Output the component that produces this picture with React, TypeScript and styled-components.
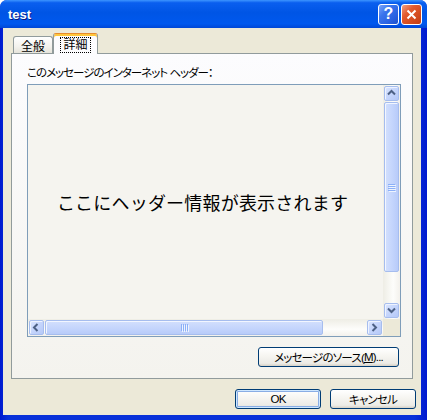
import React from "react";
import styled, { createGlobalStyle, css } from "styled-components";

const UI_FONT = `"Liberation Sans", "Noto Sans CJK JP", sans-serif`;

const GlobalStyle = createGlobalStyle`
  html, body {
    margin: 0;
    padding: 0;
    background: #ffffff;
  }
  body {
    font-family: ${UI_FONT};
    font-size: 12px;
  }
`;

const Window = styled.div`
  width: 427px;
  height: 420px;
  display: flex;
  flex-direction: column;
  background: #0831d9;
  border-radius: 7px 7px 0 0;
  overflow: hidden;
`;

const TitleBar = styled.div`
  flex: none;
  height: 28px;
  display: flex;
  align-items: center;
  justify-content: space-between;
  padding: 0 5px 0 8px;
  background: linear-gradient(
    to bottom,
    #3d95ff 0%,
    #0a5fef 10%,
    #0055e5 45%,
    #0058ee 85%,
    #0047d6 100%
  );
`;

const Title = styled.div`
  color: #ffffff;
  font: bold 13px "Liberation Sans", sans-serif;
  text-shadow: 1px 1px 0 #0a1883;
  margin-top: 1px;
`;

const CaptionButtons = styled.div`
  display: flex;
  gap: 2px;
`;

const CaptionButton = styled.div<{ $close?: boolean }>`
  box-sizing: border-box;
  width: 21px;
  height: 21px;
  border: 1px solid #ffffff;
  border-radius: 3px;
  display: flex;
  align-items: center;
  justify-content: center;
  color: #ffffff;
  font: bold 16px "Liberation Sans", sans-serif;
  background: ${(p) =>
    p.$close
      ? "linear-gradient(135deg, #f0a083 0%, #e35a2e 35%, #d24a1e 70%, #c23c14 100%)"
      : "linear-gradient(135deg, #7aa5fb 0%, #3a74ec 35%, #2a62e2 70%, #1d50cc 100%)"};
`;

const Frame = styled.div`
  flex: 1;
  display: flex;
  padding: 0 6px 5px 3px;
  background: linear-gradient(to right, #0019cf 0%, #0831d9 2%, #0831d9 97%, #0019cf 100%);
`;

const Client = styled.div`
  flex: 1;
  display: flex;
  flex-direction: column;
  background: #ece9d8;
  padding-top: 5px;
`;

const TabArea = styled.div`
  margin: 0 8px;
  display: flex;
  flex-direction: column;
`;

const TabStrip = styled.div`
  height: 20px;
  display: flex;
  align-items: flex-end;
  padding-left: 2px;
  position: relative;
  z-index: 1;
`;

const Tab = styled.div<{ $active?: boolean }>`
  box-sizing: border-box;
  display: flex;
  align-items: center;
  justify-content: center;
  font: 12px ${UI_FONT};
  color: #000000;
  border: 1px solid #919b9c;
  border-bottom: none;
  border-radius: 3px 3px 0 0;
  ${(p) =>
    p.$active
      ? css`
          width: 45px;
          height: 21px;
          margin-bottom: -1px;
          padding-top: 1px;
          background: #fcfcfe;
          border-top: 1px solid #e68b2c;
          box-shadow: inset 0 2px 0 #ffc73c;
        `
      : css`
          width: 40px;
          height: 17px;
          background: linear-gradient(to bottom, #ffffff, #f3f2ed 60%, #e6e4db);
        `}
`;

const FocusText = styled.span`
  outline: 1px dotted #000000;
  outline-offset: 0;
  padding: 0 2px;
  line-height: 14px;
`;

const Panel = styled.div`
  box-sizing: border-box;
  height: 326px;
  border: 1px solid #919b9c;
  background: linear-gradient(to bottom, #fcfcfe, #f4f3ee);
  padding: 12px 11px 0 15px;
  display: flex;
  flex-direction: column;
`;

const Label = styled.div`
  font: 11.5px ${UI_FONT};
  font-feature-settings: "palt";
  letter-spacing: -1px;
  line-height: 15px;
  margin-bottom: 3px;
  color: #000000;
`;

const Edit = styled.div`
  box-sizing: border-box;
  width: 374px;
  height: 253px;
  border: 1px solid #7f9db9;
  display: grid;
  grid-template-columns: 1fr 17px;
  grid-template-rows: 1fr 17px;
  background: #f5f4ef;
`;

const Content = styled.div`
  display: flex;
  align-items: center;
  justify-content: center;
  padding-right: 6px;
  font: 18px "Noto Sans CJK JP", sans-serif;
  letter-spacing: 0.2px;
  color: #000000;
`;

const VTrack = styled.div`
  display: flex;
  flex-direction: column;
  background: linear-gradient(to right, #eeede5, #fdfdfb 60%, #f3f1ec);
`;

const HTrack = styled.div`
  display: flex;
  background: linear-gradient(to bottom, #eeede5, #fdfdfb 60%, #f3f1ec);
`;

const Corner = styled.div`
  background: #ece9d8;
`;

const ScrollButton = styled.div`
  box-sizing: border-box;
  flex: none;
  width: 17px;
  height: 17px;
  padding: 1px;
  display: flex;
`;

const ButtonFace = styled.div`
  flex: 1;
  border: 1px solid #a6bdee;
  border-radius: 2px;
  box-shadow: inset 1px 1px 0 #eef3ff;
  background: linear-gradient(135deg, #dce6fe 0%, #c5d5fc 50%, #b5c8f7 100%);
  display: flex;
  align-items: center;
  justify-content: center;
`;

const Thumb = styled.div<{ $horizontal?: boolean }>`
  box-sizing: border-box;
  flex: none;
  border: 1px solid #a6bdee;
  border-radius: 2px;
  box-shadow: inset 1px 1px 0 #f2f6ff;
  display: flex;
  align-items: center;
  justify-content: center;
  gap: 1px;
  flex-direction: ${(p) => (p.$horizontal ? "row" : "column")};
  background: ${(p) =>
    p.$horizontal
      ? "linear-gradient(to bottom, #d3e0fd, #c3d4fc 60%, #b8cbf9)"
      : "linear-gradient(to right, #d3e0fd, #c3d4fc 60%, #b8cbf9)"};
  ${(p) =>
    p.$horizontal
      ? css`
          margin: 1px 0;
        `
      : css`
          margin: 0 1px;
        `}
`;

const Grip = styled.div<{ $horizontal?: boolean }>`
  flex: none;
  background: #8cb0f8;
  box-shadow: 1px 1px 0 #eef4fe;
  ${(p) =>
    p.$horizontal
      ? css`
          width: 1px;
          height: 7px;
        `
      : css`
          width: 7px;
          height: 1px;
        `}
`;

const Spacer = styled.div`
  flex: 1;
`;

const SourceRow = styled.div`
  display: flex;
  justify-content: flex-end;
  margin-top: 10px;
  padding-right: 2px;
`;

const PushButton = styled.div<{ $width: number; $default?: boolean }>`
  box-sizing: border-box;
  width: ${(p) => p.$width}px;
  height: 20px;
  border: 1px solid #003c74;
  border-radius: 3px;
  display: flex;
  align-items: center;
  justify-content: center;
  font: 11.5px ${UI_FONT};
  font-feature-settings: "palt";
  letter-spacing: -0.8px;
  color: #000000;
  background: linear-gradient(to bottom, #ffffff 0%, #f7f6f2 40%, #ecebe6 85%, #d6d0c5 100%);
  ${(p) =>
    p.$default &&
    css`
      box-shadow: inset 0 0 0 1px #cee7ff, inset 0 0 0 2px #89ade4;
    `}
`;

const Underline = styled.span`
  text-decoration: underline;
`;

const Footer = styled.div`
  display: flex;
  justify-content: flex-end;
  gap: 9px;
  padding: 10px 5px 0 0;
`;

const Arrow = ({ dir }: { dir: "up" | "down" | "left" | "right" }) => {
  const pts = {
    up: "1,5.5 4.5,2 8,5.5",
    down: "1,2.5 4.5,6 8,2.5",
    left: "5.5,1 2,4.5 5.5,8",
    right: "2.5,1 6,4.5 2.5,8",
  }[dir];
  return (
    <svg width="9" height="9" viewBox="0 0 9 9">
      <polyline points={pts} fill="none" stroke="#4d6185" strokeWidth="2" />
    </svg>
  );
};

const Grips = ({ horizontal }: { horizontal?: boolean }) => (
  <>
    {[0, 1, 2, 3].map((i) => (
      <Grip key={i} $horizontal={horizontal} />
    ))}
  </>
);

export default function App() {
  return (
    <>
      <GlobalStyle />
      <Window>
        <TitleBar>
          <Title>test</Title>
          <CaptionButtons>
            <CaptionButton>?</CaptionButton>
            <CaptionButton $close>
              <svg width="11" height="11" viewBox="0 0 11 11">
                <path d="M1.5 1.5 L9.5 9.5 M9.5 1.5 L1.5 9.5" stroke="#ffffff" strokeWidth="2" />
              </svg>
            </CaptionButton>
          </CaptionButtons>
        </TitleBar>
        <Frame>
          <Client>
            <TabArea>
              <TabStrip>
                <Tab>全般</Tab>
                <Tab $active>
                  <FocusText>詳細</FocusText>
                </Tab>
              </TabStrip>
              <Panel>
                <Label>このメッセージのインターネット ヘッダー：</Label>
                <Edit>
                  <Content>ここにヘッダー情報が表示されます</Content>
                  <VTrack>
                    <ScrollButton>
                      <ButtonFace>
                        <Arrow dir="up" />
                      </ButtonFace>
                    </ScrollButton>
                    <Thumb style={{ height: 170 }}>
                      <Grips />
                    </Thumb>
                    <Spacer />
                    <ScrollButton>
                      <ButtonFace>
                        <Arrow dir="down" />
                      </ButtonFace>
                    </ScrollButton>
                  </VTrack>
                  <HTrack>
                    <ScrollButton>
                      <ButtonFace>
                        <Arrow dir="left" />
                      </ButtonFace>
                    </ScrollButton>
                    <Thumb $horizontal style={{ width: 278 }}>
                      <Grips horizontal />
                    </Thumb>
                    <Spacer />
                    <ScrollButton>
                      <ButtonFace>
                        <Arrow dir="right" />
                      </ButtonFace>
                    </ScrollButton>
                  </HTrack>
                  <Corner />
                </Edit>
                <SourceRow>
                  <PushButton $width={141}>
                    メッセージのソース(<Underline>M</Underline>)...
                  </PushButton>
                </SourceRow>
              </Panel>
            </TabArea>
            <Footer>
              <PushButton $width={86} $default>
                OK
              </PushButton>
              <PushButton $width={86}>キャンセル</PushButton>
            </Footer>
          </Client>
        </Frame>
      </Window>
    </>
  );
}
